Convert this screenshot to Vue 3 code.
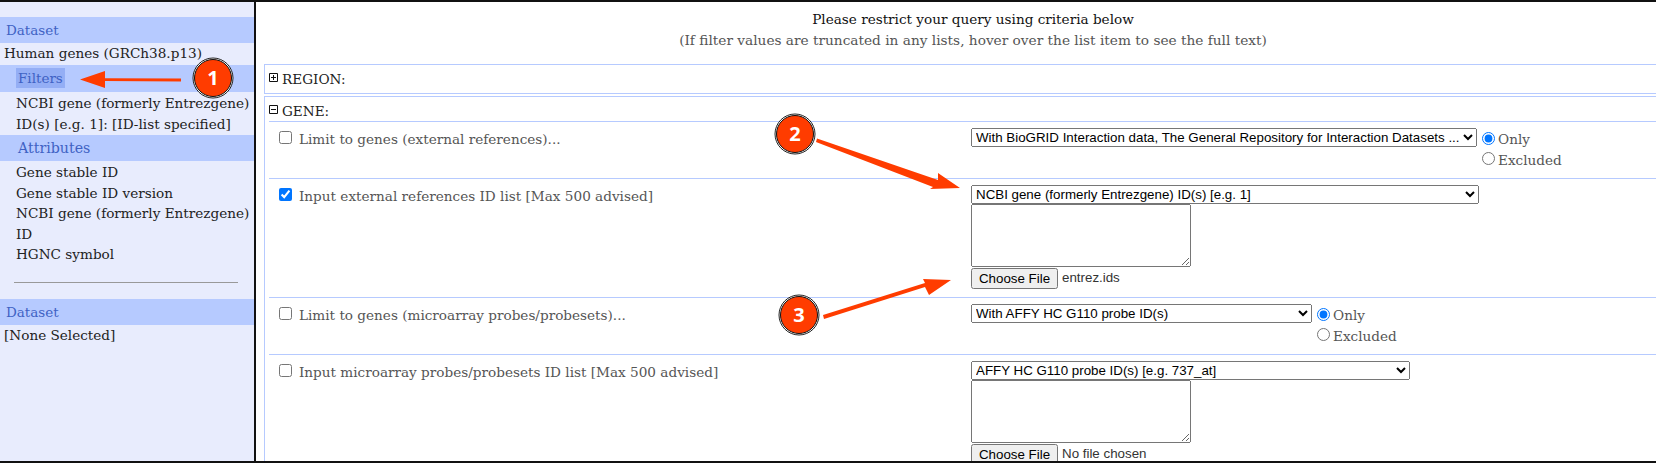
<script setup>
const attributes = ['Gene stable ID', 'Gene stable ID version', 'NCBI gene (formerly Entrezgene) ID', 'HGNC symbol']
</script>

<template>
  <div class="page">
    <aside class="side">
      <div class="band first">Dataset</div>
      <div class="dataset">Human genes (GRCh38.p13)</div>
      <div class="band sub filters"><span class="picked">Filters</span></div>
      <div class="summary">NCBI gene (formerly Entrezgene) ID(s) [e.g. 1]: [ID-list specified]</div>
      <div class="band sub attrs">Attributes</div>
      <div class="attr-list">
        <div v-for="a in attributes" :key="a">{{ a }}</div>
      </div>
      <hr class="rule" />
      <div class="band">Dataset</div>
      <div class="dataset">[None Selected]</div>
    </aside>

    <main class="main">
      <div class="head">
        <div class="title">Please restrict your query using criteria below</div>
        <div class="hint">(If filter values are truncated in any lists, hover over the list item to see the full text)</div>
      </div>

      <section class="box region">
        <div class="box-title">
          <svg class="toggle" width="9" height="9" viewBox="0 0 9 9"><path d="M.5.5h8v8h-8zM2 4.5h5M4.5 2v5" fill="none" stroke="#111" /></svg>
          <span>REGION:</span>
        </div>
      </section>

      <section class="box gene">
        <div class="box-title gene-title">
          <svg class="toggle" width="9" height="9" viewBox="0 0 9 9"><path d="M.5.5h8v8h-8zM2 4.5h5" fill="none" stroke="#111" /></svg>
          <span>GENE:</span>
        </div>

        <div class="row short">
          <label class="lbl"><input type="checkbox" />Limit to genes (external references)...</label>
          <div class="ctl inline">
            <select class="w-bio"><option>With BioGRID Interaction data, The General Repository for Interaction Datasets ...</option></select>
            <div class="radios">
              <label><input type="radio" name="r1" checked />Only</label>
              <label><input type="radio" name="r1" />Excluded</label>
            </div>
          </div>
        </div>

        <div class="row tall">
          <label class="lbl"><input type="checkbox" checked />Input external references ID list [Max 500 advised]</label>
          <div class="ctl">
            <select class="w-ncbi"><option>NCBI gene (formerly Entrezgene) ID(s) [e.g. 1]</option></select>
            <textarea class="ids"></textarea>
            <div class="file"><button type="button">Choose File</button><span>entrez.ids</span></div>
          </div>
        </div>

        <div class="row short">
          <label class="lbl"><input type="checkbox" />Limit to genes (microarray probes/probesets)...</label>
          <div class="ctl inline">
            <select class="w-affy"><option>With AFFY HC G110 probe ID(s)</option></select>
            <div class="radios">
              <label><input type="radio" name="r2" checked />Only</label>
              <label><input type="radio" name="r2" />Excluded</label>
            </div>
          </div>
        </div>

        <div class="row tall last">
          <label class="lbl"><input type="checkbox" />Input microarray probes/probesets ID list [Max 500 advised]</label>
          <div class="ctl">
            <select class="w-probe"><option>AFFY HC G110 probe ID(s) [e.g. 737_at]</option></select>
            <textarea class="ids"></textarea>
            <div class="file"><button type="button">Choose File</button><span>No file chosen</span></div>
          </div>
        </div>
      </section>
    </main>

    <svg class="notes" width="1656" height="468" viewBox="0 0 1656 468">
      <g fill="#ff3c00">
        <path d="M181 78.500L105 78.200V71L80 79.500L105 88V81L181 81.500Z" />
        <path d="M817 138.500L816 142L933 187L930 189L960 188L938 173L938 180Z" />
        <path d="M823 315L824 319L925 287L929 295L951 280L923 279L925 283Z" />
      </g>
      <g v-for="b in [[213, 78, '1'], [795, 134, '2'], [799, 315, '3']]" :key="b[2]">
        <circle :cx="b[0]" :cy="b[1]" r="20" fill="#fff" stroke="#222" stroke-width="1" />
        <circle :cx="b[0]" :cy="b[1]" r="18.500" fill="#ff3c00" stroke="#111" stroke-width="1" />
        <text :x="b[0]" :y="b[1] + 7" class="num" text-anchor="middle">{{ b[2] }}</text>
      </g>
    </svg>
  </div>
</template>

<style>
body {
  background: #fff;
}
</style>

<style scoped>
.page {
  position: relative;
  display: flex;
  width: 1656px;
  height: 463px;
  box-sizing: border-box;
  border-top: 2px solid #111;
  border-bottom: 2px solid #111;
  overflow: hidden;
  font-family: "DejaVu Serif", "Liberation Serif", serif;
  font-size: 13.600px;
  line-height: 20.500px;
  color: #222;
}
.side {
  width: 254px;
  flex: none;
  background: #e8ecfd;
  border-right: 2px solid #111;
}
.band {
  height: 26px;
  padding-left: 6px;
  background: #b6caff;
  color: #3f62c4;
  font-size: 13.500px;
  line-height: 26px;
}
.band.first {
  margin-top: 15px;
}
.band.sub {
  padding-left: 16px;
}
.band.attrs {
  padding-left: 18px;
  font-size: 14.200px;
}
.filters {
  height: 27px;
}
.picked {
  display: inline-block;
  height: 20px;
  margin-top: 3px;
  padding: 0 2px 0 2px;
  line-height: 20px;
  background: #94aef5;
}
.dataset {
  padding: 0 4px;
  height: 22px;
  line-height: 21px;
}
.summary {
  height: 42px;
  padding: 1px 0 0 16px;
  white-space: normal;
}
.attr-list {
  padding: 1px 0 0 16px;
}
.rule {
  width: 224px;
  margin: 17px 0 16px 14px;
  border: 0;
  border-top: 1px solid #999;
}
.main {
  flex: 1;
  min-width: 0;
  padding-left: 8px;
  overflow: hidden;
}
.head {
  height: 62px;
  padding: 8px 0 0 26px;
  box-sizing: border-box;
  text-align: center;
}
.title {
  color: #111;
  line-height: 19.500px;
}
.hint {
  color: #555;
  font-size: 13.700px;
}
.box {
  border: 1px solid #b6caff;
  border-right: 0;
  padding-left: 4px;
}
.region {
  height: 30px;
  box-sizing: border-box;
  margin-bottom: 2px;
}
.box-title {
  display: flex;
  align-items: center;
  gap: 4px;
  height: 24px;
}
.box-title span {
  margin-top: 4px;
}
.gene {
  border-bottom: 0;
}
.gene-title {
  border-bottom: 1px solid #b6caff;
}
.row {
  display: grid;
  grid-template-columns: 702px 1fr;
  border-bottom: 1px solid #b6caff;
}
.short {
  height: 56px;
}
.tall {
  height: 118px;
}
.last {
  border-bottom: 0;
}
.lbl {
  display: flex;
  align-items: flex-start;
  padding: 7px 0 0 10px;
  color: #555;
}
.lbl input {
  width: 13px;
  height: 13px;
  margin: 2px 7px 0 0;
}
.ctl {
  padding-top: 6px;
}
.inline {
  display: flex;
  align-items: flex-start;
}
select,
button,
.file span {
  font-family: "Liberation Sans", Arial, sans-serif;
  font-size: 13.333px;
}
select {
  display: block;
  height: 19px;
  color: #000;
}
.w-bio {
  width: 506px;
}
.w-ncbi {
  width: 508px;
}
.w-affy {
  width: 341px;
}
.w-probe {
  width: 439px;
}
.ids {
  display: block;
  width: 220px;
  height: 63px;
  box-sizing: border-box;
  margin: 0;
}
.file {
  display: flex;
  align-items: center;
  gap: 4px;
  margin-top: 1px;
}
.file button {
  width: 87px;
  height: 21px;
  padding: 0;
}
.file span {
  color: #333;
}
.radios {
  display: flex;
  flex-direction: column;
  margin-left: 5px;
  padding-top: 1px;
  color: #555;
}
.radios label {
  display: flex;
  align-items: center;
  height: 20.500px;
}
.radios input {
  width: 13px;
  height: 13px;
  margin: -2px 3px 0 0;
}
.notes {
  position: absolute;
  left: 0;
  top: -2px;
  pointer-events: none;
}
.num {
  fill: #fff;
  font-family: "Open Sans", "DejaVu Sans", sans-serif;
  font-size: 20px;
  font-weight: 700;
}
</style>
